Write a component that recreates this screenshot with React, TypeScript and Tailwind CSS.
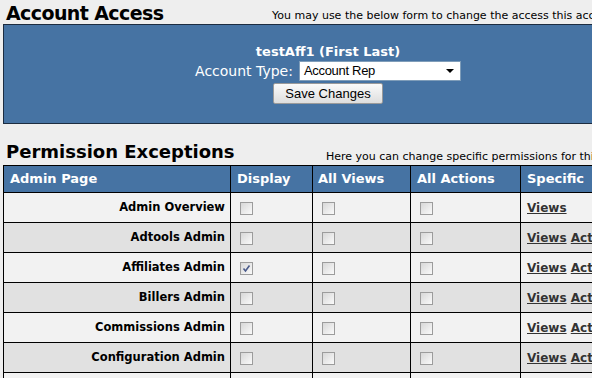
import React from "react";

const rows = [
  { name: "Admin Overview", checked: false, actions: false },
  { name: "Adtools Admin", checked: false, actions: true },
  { name: "Affiliates Admin", checked: true, actions: true },
  { name: "Billers Admin", checked: false, actions: true },
  { name: "Commissions Admin", checked: false, actions: true },
  { name: "Configuration Admin", checked: false, actions: true },
  { name: "Content Admin", checked: false, actions: true },
];

function Box({ checked }: { checked?: boolean }) {
  return (
    <span className="inline-block w-[13px] h-[13px] border border-[#9c9c9c] bg-gradient-to-br from-[#d8d8d8] to-[#fafafa] relative align-middle">
      {checked && (
        <svg viewBox="0 0 11 11" className="absolute left-0 top-0 w-[11px] h-[11px]">
          <path d="M2.5 5.5 L4.5 8 L8.5 2.5" stroke="#4a5a8a" strokeWidth="1.6" fill="none" />
        </svg>
      )}
    </span>
  );
}

export default function App() {
  return (
    <div className="w-[592px] h-[378px] overflow-hidden bg-[#eeeeee] font-['DejaVu_Sans',sans-serif] text-black">
      <div className="w-[720px] pl-[3px]">
        <div className="flex items-end h-[24px]">
          <div className="pl-[3px] text-[19px] font-bold leading-[22px] w-[269px] tracking-[-0.6px]">Account Access</div>
          <div className="text-[11px] leading-[13px] pb-[2px]">You may use the below form to change the access this account has</div>
        </div>
        <div className="h-[100px] bg-[#4673a3] border border-[#1c2c40] flex flex-col items-center pt-[19px] text-white w-[620px] pl-[30px]">
          <div className="text-[13px] font-bold leading-[15px]">testAff1 (First Last)</div>
          <div className="flex items-center mt-[2px]">
            <span className="text-[14px] leading-[16px] mr-[6px]">Account Type:</span>
            <div className="w-[162px] h-[20px] bg-white border border-[#7f9db9] flex items-center justify-between pl-[4px] pr-[6px] text-black font-['Liberation_Sans',sans-serif] text-[13px]">
              <span className="tracking-[-0.3px]">Account Rep</span>
              <svg width="8" height="4" viewBox="0 0 8 4"><path d="M0 0 L8 0 L4 4 Z" fill="#000" /></svg>
            </div>
          </div>
          <div className="mt-[2px] w-[110px] h-[21px] rounded-[2px] border border-[#9a9a9a] bg-gradient-to-b from-[#fafafa] to-[#dedede] text-black font-['Liberation_Sans',sans-serif] text-[13px] leading-[19px] text-center">
            Save Changes
          </div>
        </div>
        <div className="flex items-end h-[41px]">
          <div className="pl-[3px] text-[18px] font-bold leading-[21px] w-[323px] pb-[3px]">Permission Exceptions</div>
          <div className="text-[11px] leading-[13px] pb-[2px]">Here you can change specific permissions for this account</div>
        </div>
        <table className="border-collapse border border-black">
          <thead>
            <tr className="bg-[#4673a3] text-white text-[13px] font-bold h-[27px]">
              <th className="border border-black text-left pl-[6px] w-[227px] font-bold">Admin Page</th>
              <th className="border border-black text-left pl-[6px] w-[82px] font-bold">Display</th>
              <th className="border border-black text-left pl-[5px] w-[98px] font-bold">All Views</th>
              <th className="border border-black text-left pl-[6px] w-[110px] font-bold">All Actions</th>
              <th className="border border-black text-left pl-[6px] w-[180px] font-bold">Specific</th>
            </tr>
          </thead>
          <tbody>
            {rows.map((r, i) => (
              <tr key={r.name} className={`h-[30px] ${i % 2 === 0 ? "bg-[#f2f2f2]" : "bg-[#e1e1e1]"}`}>
                <td className="border border-black text-right pr-[5px] font-bold text-[11.5px]">{r.name}</td>
                <td className="border border-black pl-[9px]"><Box checked={r.checked} /></td>
                <td className="border border-black pl-[9px]"><Box /></td>
                <td className="border border-black pl-[9px]"><Box /></td>
                <td className="border border-black pl-[6px] font-bold text-[12px] text-[#333333]">
                  <span className="underline">Views</span>
                  {r.actions && <> <span className="underline">Actions</span></>}
                </td>
              </tr>
            ))}
          </tbody>
        </table>
      </div>
    </div>
  );
}
